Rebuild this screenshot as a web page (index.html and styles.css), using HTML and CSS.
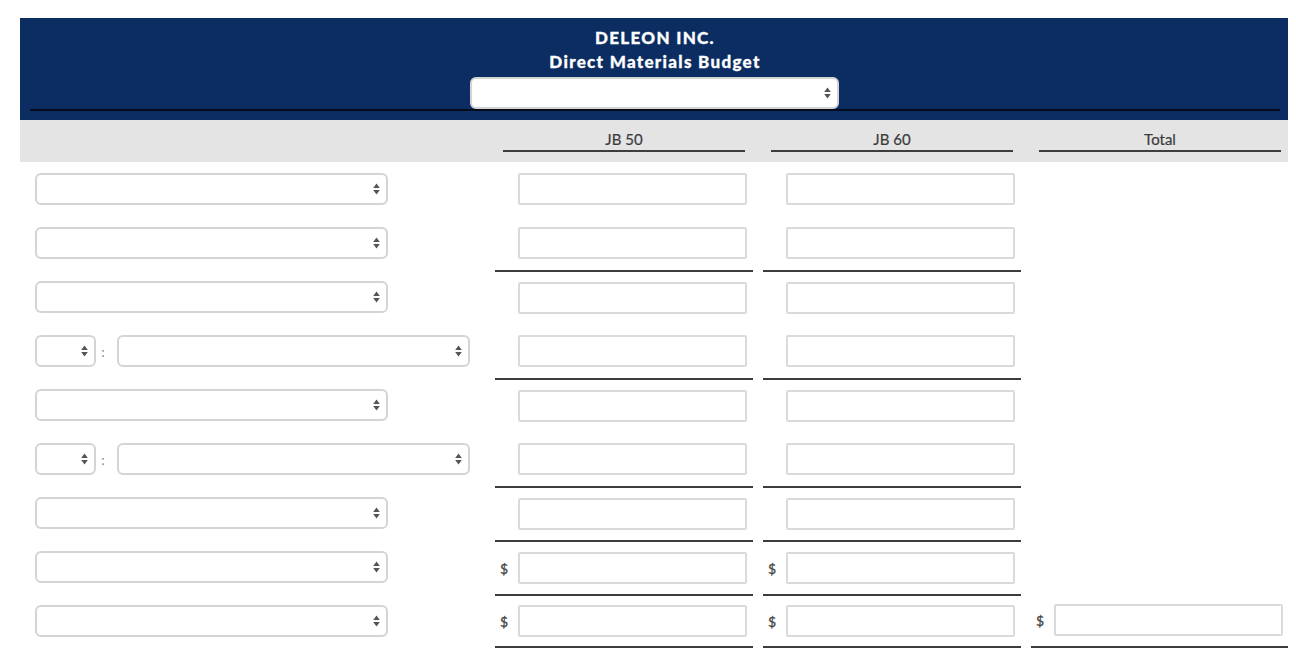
FILE: index.html
```html
<!DOCTYPE html>
<html>
<head>
<meta charset="utf-8">
<link rel="stylesheet" href="styles.css">
</head>
<body>
<div class="sheet">
  <div class="banner">
    <div class="title">DELEON INC.</div>
    <div class="title">Direct Materials Budget</div>
    <div class="select head-select"><svg class="arr" width="7" height="12" viewBox="0 0 7 12"><path d="M3.5 0.5 L6.8 5 H0.2 Z M3.5 11.5 L6.8 7 H0.2 Z"/></svg></div>
    <div class="banner-rule"></div>
  </div>
  <div class="colhead">
    <div></div>
    <div class="ch"><span>JB 50</span></div>
    <div class="ch"><span>JB 60</span></div>
    <div class="ch ch3"><span>Total</span></div>
  </div>
  <div class="grid" id="grid"></div>
</div>
<script src="app.js"></script>
</body>
</html>
```

FILE: styles.css
```css
* { box-sizing: border-box; }
body {
  margin: 0;
  padding: 18px 0 0 20px;
  background: #fff;
  font-family: Lato, "Open Sans", "Liberation Sans", sans-serif;
  color: #3b3b3b;
}
.sheet { width: 1268px; }
.banner {
  background: #0c2d62;
  padding: 8px 8px 9px 10px;
  display: flex;
  flex-direction: column;
  align-items: center;
}
.title {
  color: #fff;
  font-weight: 900;
  font-size: 17px;
  line-height: 24px;
  letter-spacing: 1.3px;
  -webkit-text-stroke: 0.3px #fff;
}
.head-select {
  width: 369px;
  margin-top: 3px;
  border: none;
  margin-left: -2px;
  padding-right: 7px;
}
.banner-rule {
  align-self: stretch;
  height: 2px;
  background: #050b18;
}
.colhead {
  background: #e4e4e4;
  height: 42px;
  display: grid;
  grid-template-columns: 470px 268px 268px 262px;
}
.ch {
  padding: 8px 13px 0 13px;
}
.ch span {
  display: block;
  text-align: center;
  font-size: 15px;
  line-height: 22px;
  height: 24px;
  border-bottom: 2px solid #3d3d3d;
  color: #3b3b3b;
  -webkit-text-stroke: 0.2px #3b3b3b;
}
.ch3 { padding-right: 7px; }
.grid {
  display: grid;
  grid-template-columns: 470px 268px 268px 262px;
}
.cell {
  height: 54px;
  display: flex;
  align-items: center;
}
.lab { padding-left: 15px; }
.num .cur {
  width: 18px;
  font-size: 14px;
  color: #444;
  -webkit-text-stroke: 0.3px #444;
}
.num .nocur { width: 18px; }
.cell.top { border-top: 2px solid #3d3d3d; }
.cell.bottom { border-bottom: 2px solid #3d3d3d; }
.c1, .c2 { margin: 0 5px; }
.c1.num, .c2.num { padding-left: 5px; }
.c3 { margin-left: 5px; }
.c3.num { padding-left: 5px; }
.inp {
  width: 229px;
  height: 32px;
  border: 2px solid #dadada;
  border-radius: 2px;
  background: #fff;
}
.select {
  height: 32px;
  border: 2px solid #d4d4d4;
  border-radius: 6px;
  background: #fff;
  display: flex;
  align-items: center;
  justify-content: flex-end;
  padding-right: 6px;
}
.arr { fill: #555; }
.wide { width: 353px; }
.small { width: 61px; }
.colon {
  width: 14px;
  margin-right: 7px;
  text-align: center;
  color: #888;
  font-size: 14px;
}
```

FILE: app.js
```js
var rows = [
  {t:'w', cur:['','',null]},
  {t:'w', cur:['','',null], line:true},
  {t:'w', cur:['','',null]},
  {t:'r', cur:['','',null], line:true},
  {t:'w', cur:['','',null]},
  {t:'r', cur:['','',null], line:true},
  {t:'w', cur:['','',null], line:true},
  {t:'w', cur:['$','$',null], line:true},
  {t:'w', cur:['$','$','$'], last:true}
];
var arrow = '<svg class="arr" width="7" height="12" viewBox="0 0 7 12"><path d="M3.5 0.5 L6.8 5 H0.2 Z M3.5 11.5 L6.8 7 H0.2 Z"/></svg>';
var g = document.getElementById('grid');
var html = '';
rows.forEach(function(r, i){
  var prevLine = i > 0 && rows[i-1].line;
  var lab = '<div class="cell lab">';
  if (r.t === 'w') {
    lab += '<div class="select wide">' + arrow + '</div>';
  } else {
    lab += '<div class="select small">' + arrow + '</div><span class="colon">:</span><div class="select wide">' + arrow + '</div>';
  }
  lab += '</div>';
  html += lab;
  for (var c = 0; c < 3; c++) {
    var cls = 'cell c' + (c+1);
    if (c < 2 && prevLine) cls += ' top';
    if (r.last) cls += ' bottom';
    if (r.cur[c] === null) {
      html += '<div class="' + cls + '"></div>';
    } else {
      cls += ' num';
      var cur = r.cur[c] ? '<span class="cur">$</span>' : '<span class="nocur"></span>';
      html += '<div class="' + cls + '">' + cur + '<div class="inp"></div></div>';
    }
  }
});
g.innerHTML = html;
```
